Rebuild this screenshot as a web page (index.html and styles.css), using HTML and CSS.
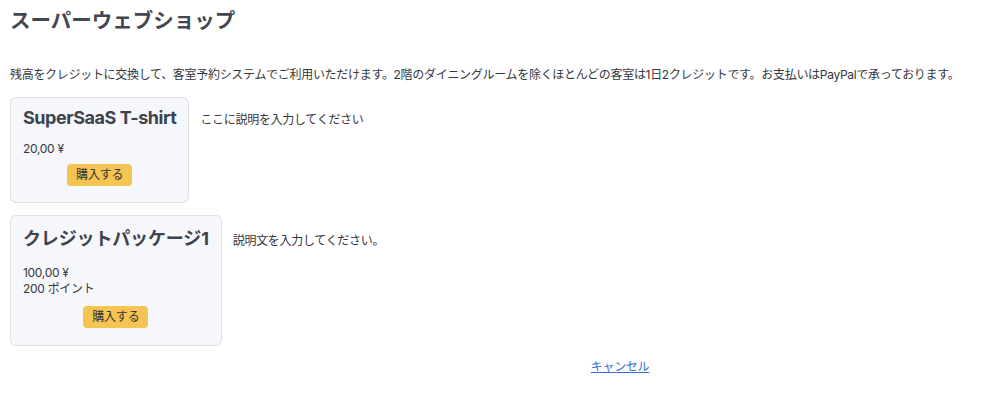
FILE: index.html
```html
<!DOCTYPE html>
<html lang="ja">
<head>
<meta charset="utf-8">
<title>スーパーウェブショップ</title>
<link rel="stylesheet" href="styles.css">
</head>
<body>
<main class="page">
  <h1 class="title">スーパーウェブショップ</h1>
  <p class="intro">残高をクレジットに交換して、客室予約システムでご利用いただけます。2階のダイニングルームを除くほとんどの客室は1日2クレジットです。お支払いはPayPalで承っております。</p>

  <div class="product">
    <div class="card">
      <h2 class="card-title">SuperSaaS T-shirt</h2>
      <div class="card-info">20,00 ¥</div>
      <div class="card-action"><button class="buy">購入する</button></div>
    </div>
    <div class="desc">ここに説明を入力してください</div>
  </div>

  <div class="product">
    <div class="card card-cjk">
      <h2 class="card-title">クレジットパッケージ1</h2>
      <div class="card-info">100,00 ¥<br>200 ポイント</div>
      <div class="card-action"><button class="buy">購入する</button></div>
    </div>
    <div class="desc">説明文を入力してください。</div>
  </div>

  <div class="footer"><a class="cancel" href="#">キャンセル</a></div>
</main>
</body>
</html>
```

FILE: styles.css
```css
html, body {
  margin: 0;
  padding: 0;
  background: #ffffff;
}

body {
  font-family: Inter, "Noto Sans CJK JP", sans-serif;
  color: #34373d;
  font-size: 12px;
  line-height: 16px;
  letter-spacing: -0.3px;
}

.page {
  padding: 9px 10px 10px 10px;
}

.title {
  margin: 0;
  font-size: 20.5px;
  line-height: 24px;
  font-weight: 700;
  color: #434751;
  letter-spacing: 0;
}

.intro {
  margin: 34px 0 14px 0;
  font-size: 12px;
  line-height: 16px;
  white-space: nowrap;
}

.product {
  display: flex;
  align-items: baseline;
  gap: 11px;
  margin-bottom: 12px;
}

.card {
  background: #f5f7fa;
  border: 1px solid #dde1e6;
  border-radius: 6px;
  padding: 8px 12px 16px 12px;
}

.card-title {
  margin: 0 0 11px 0;
  font-size: 18px;
  line-height: 24px;
  font-weight: 700;
  color: #3e434e;
  white-space: nowrap;
  letter-spacing: -0.45px;
}

.card-cjk {
  padding-bottom: 17px;
}

.card-cjk .card-title {
  line-height: 30px;
  letter-spacing: -0.15px;
}

.card-cjk .card-action {
  margin-top: 9px;
}

.card-info {
  font-size: 12px;
  line-height: 16px;
}

.card-action {
  display: flex;
  justify-content: center;
  margin-top: 7px;
}

.buy {
  font-family: inherit;
  font-size: 12px;
  line-height: 16px;
  letter-spacing: -0.2px;
  color: #333;
  background: #f6c452;
  border: none;
  border-radius: 4px;
  padding: 3px 9px;
}

.desc {
  font-size: 12px;
  line-height: 16px;
}

.footer {
  margin-top: 13px;
  padding-left: 256px;
  text-align: center;
}

.cancel {
  color: #3a6fd8;
  text-decoration: underline;
}
```
